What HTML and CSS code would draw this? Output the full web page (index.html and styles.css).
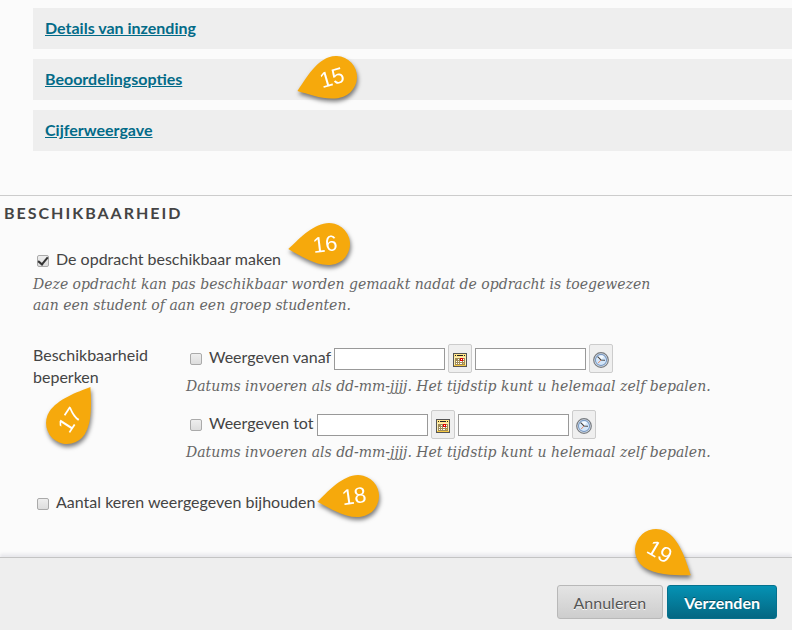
FILE: index.html
```html
<!DOCTYPE html>
<html lang="nl">
<head>
    <meta charset="UTF-8">
    <meta name="viewport" content="width=device-width, initial-scale=1.0">
    <title>Opdracht maken</title>
    <link rel="stylesheet" href="styles.css">
</head>
<body>
    <svg class="defs" aria-hidden="true">
        <symbol id="calendar" viewBox="0 0 14 14">
            <rect x="0.5" y="0.5" width="13" height="13" fill="#fdeeb0" stroke="#555"/>
            <path d="M1 1h12v3H1z" fill="#ffe48a"/>
            <path d="M2 2.5h1M4 2.5h6M11 2.5h1" stroke="#222"/>
            <path d="M2 5h10v7H2z" fill="#a08c58"/>
            <path d="M5 6h1v1H5zM10 6h1v1h-1zM3 8h1v1H3zM5 8h1v1H5zM7 8h2v1H7zM10 8h1v1h-1zM3 10h1v1H3zM5 10h1v1H5zM7 10h2v1H7z" fill="#fff"/>
            <path d="M10 10h1v1h-1zM1 12h12v1H1z" fill="#f5c842"/>
            <path d="M7 5h3v3H7z" fill="#e00000"/>
            <path d="M8 6h1v1H8z" fill="#fff"/>
        </symbol>
        <symbol id="clock" viewBox="0 0 16 16">
            <circle cx="8" cy="8" r="7.3" fill="#e3e8ee" stroke="#777b80" stroke-width="1.2"/>
            <circle cx="8" cy="8" r="5.6" fill="#d3e6fa" stroke="#7d9cc4" stroke-width="1.1"/>
            <path d="M4 6.5a4.5 4.5 0 0 1 7-2L8 8z" fill="#f5faff"/>
            <path d="M4.6 4.6L8 8L12 8.3" fill="none" stroke="#444" stroke-width="1.1"/>
            <path d="M8 8L5.2 11" stroke="#e08b6a"/>
        </symbol>
        <symbol id="drop-left" viewBox="-48 -48 96 96">
            <path d="M-41 0C-30 -8 -15 -21 0 -21A21 21 0 0 1 0 21C-15 21 -30 8 -41 0Z"/>
        </symbol>
        <symbol id="drop-right" viewBox="-48 -48 96 96">
            <path d="M43 0C32 -8 15 -21 0 -21A21 21 0 0 0 0 21C15 21 32 8 43 0Z"/>
        </symbol>
    </svg>

    <main>
        <div class="sections">
            <div class="section-bar"><a href="#">Details van inzending</a></div>
            <div class="section-bar">
                <a href="#">Beoordelingsopties</a>
                <svg class="marker marker-15" viewBox="-48 -48 96 96">
                    <g transform="rotate(-20)"><use href="#drop-left" x="-48" y="-48" width="96" height="96"/></g>
                    <text transform="rotate(-16)" x="-4" y="7">15</text>
                </svg>
            </div>
            <div class="section-bar"><a href="#">Cijferweergave</a></div>
        </div>

        <section class="availability">
            <h2>Beschikbaarheid</h2>
            <div class="option">
                <input type="checkbox" id="available" checked>
                <label for="available">De opdracht beschikbaar maken</label>
                <svg class="marker marker-16" viewBox="-48 -48 96 96">
                    <g transform="rotate(-7)"><use href="#drop-left" x="-48" y="-48" width="96" height="96"/></g>
                    <text transform="rotate(-7)" x="-4" y="7">16</text>
                </svg>
            </div>
            <p class="hint intro">Deze opdracht kan pas beschikbaar worden gemaakt nadat de opdracht is toegewezen aan een student of aan een groep studenten.</p>

            <div class="limit">
                <div class="limit-label">
                    Beschikbaarheid beperken
                    <svg class="marker marker-17" viewBox="-48 -48 96 96">
                        <g transform="rotate(-57)"><use href="#drop-right" x="-48" y="-48" width="96" height="96"/></g>
                        <text transform="rotate(-57)" x="4" y="8">17</text>
                    </svg>
                </div>
                <div class="limit-fields">
                    <div class="date-row">
                        <input type="checkbox" id="from">
                        <label for="from">Weergeven vanaf</label>
                        <input type="text" aria-label="Datum vanaf">
                        <button type="button" class="picker" aria-label="Datum kiezen"><svg width="14" height="14"><use href="#calendar"/></svg></button>
                        <input type="text" aria-label="Tijd vanaf">
                        <button type="button" class="picker" aria-label="Tijd kiezen"><svg width="16" height="16"><use href="#clock"/></svg></button>
                    </div>
                    <p class="hint">Datums invoeren als dd-mm-jjjj. Het tijdstip kunt u helemaal zelf bepalen.</p>
                    <div class="date-row">
                        <input type="checkbox" id="until">
                        <label for="until">Weergeven tot</label>
                        <input type="text" aria-label="Datum tot">
                        <button type="button" class="picker" aria-label="Datum kiezen"><svg width="14" height="14"><use href="#calendar"/></svg></button>
                        <input type="text" aria-label="Tijd tot">
                        <button type="button" class="picker" aria-label="Tijd kiezen"><svg width="16" height="16"><use href="#clock"/></svg></button>
                    </div>
                    <p class="hint">Datums invoeren als dd-mm-jjjj. Het tijdstip kunt u helemaal zelf bepalen.</p>
                </div>
            </div>

            <div class="option">
                <input type="checkbox" id="track">
                <label for="track">Aantal keren weergegeven bijhouden</label>
                <svg class="marker marker-18" viewBox="-48 -48 96 96">
                    <g transform="rotate(-8)"><use href="#drop-left" x="-48" y="-48" width="96" height="96"/></g>
                    <text transform="rotate(-8)" x="-4" y="7">18</text>
                </svg>
            </div>
        </section>
    </main>

    <footer>
        <button type="button" class="btn">Annuleren</button>
        <button type="submit" class="btn btn-primary">Verzenden</button>
        <svg class="marker marker-19" viewBox="-48 -48 96 96">
            <g transform="rotate(36)"><use href="#drop-right" x="-48" y="-48" width="96" height="96"/></g>
            <text transform="rotate(30)" x="4" y="7">19</text>
        </svg>
    </footer>
</body>
</html>
```
FILE: styles.css
```css
* {
    box-sizing: border-box;
}

body {
    margin: 0;
    min-height: 100vh;
    display: flex;
    flex-direction: column;
    background-color: #fbfbfb;
    color: #444;
    font-family: Lato, sans-serif;
    font-size: 16px;
    line-height: 22px;
}

.defs {
    position: absolute;
    width: 0;
    height: 0;
}

.sections {
    display: flex;
    flex-direction: column;
    gap: 10px;
    padding: 8px 0 44px 33px;
}

.section-bar {
    position: relative;
    padding: 9px 12px 10px;
    background-color: #eee;
}

.section-bar a {
    color: #036b88;
    font-weight: bold;
}

.availability {
    border-top: 1px solid #ccc;
    padding: 6px 0 44px 33px;
}

h2 {
    margin: 0 0 24px -29px;
    font-size: 16px;
    line-height: 22px;
    letter-spacing: 2px;
    text-transform: uppercase;
}

.option,
.date-row {
    position: relative;
    display: flex;
    align-items: center;
}

input[type="checkbox"] {
    appearance: none;
    display: grid;
    place-items: center;
    flex: none;
    width: 12px;
    height: 12px;
    margin: 4px 7px 0 4px;
    border: 1px solid #aaa;
    border-radius: 2px;
    background: linear-gradient(#eee, #ddd);
}

input[type="checkbox"]:checked::after {
    content: "";
    width: 4px;
    height: 8px;
    margin-top: -2px;
    border: solid #333;
    border-width: 0 2px 2px 0;
    transform: rotate(40deg);
}

.hint {
    margin: 3px 0 13px;
    color: #666;
    font-family: "DejaVu Serif", serif;
    font-size: 14px;
    font-style: italic;
    line-height: 21px;
}

.intro {
    max-width: 620px;
    margin: 4px 0 28px;
}

.limit {
    display: grid;
    grid-template-columns: 120px 1fr;
    column-gap: 33px;
    margin-bottom: 15px;
}

.limit-label {
    position: relative;
}

.date-row {
    gap: 3px;
    height: 29px;
}

.date-row input[type="checkbox"] {
    margin: 0 4px 0 4px;
}

.date-row label {
    margin-bottom: 4px;
}

input[type="text"] {
    width: 111px;
    height: 22px;
    padding: 2px;
    border: 1px solid #999;
    background-color: #fff;
    font: inherit;
}

.picker {
    display: flex;
    align-items: center;
    justify-content: center;
    width: 24px;
    height: 29px;
    padding: 3px 0 0;
    border: 1px solid #ccc;
    border-radius: 2px;
    background-color: #efefef;
}

footer {
    position: relative;
    flex: 1;
    display: flex;
    justify-content: flex-end;
    align-items: flex-start;
    gap: 4px;
    padding: 27px 15px 10px;
    border-top: 1px solid #c4c4c4;
    background-color: #eee;
    box-shadow: 0 -3px 3px #e8e8ec;
}

.btn {
    height: 34px;
    padding: 0 16px;
    border: 1px solid #b8b8b8;
    border-radius: 3px;
    background: linear-gradient(#e4e4e4, #cdcdcd);
    color: #555;
    font-family: inherit;
    font-size: 16px;
    text-shadow: 0 1px 0 #fff;
}

.btn-primary {
    border-color: #04718e;
    background: linear-gradient(#0592b4, #046782);
    color: #fff;
    font-weight: bold;
    text-shadow: 0 -1px 0 #034f63;
}

/* numbered callouts */
.marker {
    position: absolute;
    width: 96px;
    height: 96px;
    fill: #f6a90c;
    filter: drop-shadow(1px 3px 2px rgba(0, 0, 0, 0.5));
    pointer-events: none;
}

.marker text {
    fill: #fff;
    font-family: "Liberation Sans", sans-serif;
    font-size: 22px;
    text-anchor: middle;
}

.marker-15 {
    left: 255px;
    top: -30px;
}

.marker-16 {
    left: 248px;
    top: -52px;
}

.marker-17 {
    left: -14px;
    top: 31px;
}

.marker-18 {
    left: 277px;
    top: -43px;
}

.marker-19 {
    right: 88px;
    top: -56px;
}
```
